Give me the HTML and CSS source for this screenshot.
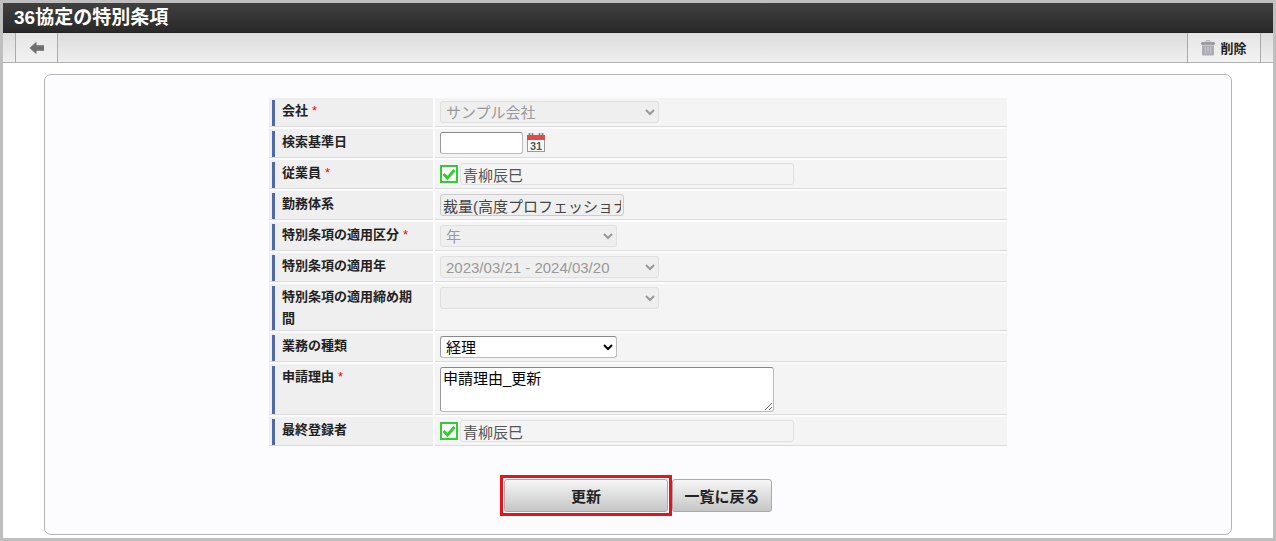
FILE: index.html
```html
<!DOCTYPE html>
<html lang="ja">
<head>
  <meta charset="UTF-8" />
  <meta name="viewport" content="width=device-width, initial-scale=1.0" />
  <title>36協定の特別条項</title>
  <link rel="stylesheet" href="styles.css">
</head>
<body>

  <header class="title-bar">
    <h1>36協定の特別条項</h1>
  </header>

  <nav class="toolbar">
    <button type="button" class="tool-button back" aria-label="戻る">
      <svg width="16" height="14" viewBox="0 0 16 14"><path d="M0.5 7L7.5 0.8V4.2H15V9.8H7.5V13.2Z" fill="#6e6e6e"/></svg>
    </button>
    <button type="button" class="tool-button delete">
      <svg width="14" height="16" viewBox="0 0 14 16">
        <path d="M5 2V0.8H9V2" fill="none" stroke="#aaa8ae"/>
        <rect x="0" y="2" width="14" height="3" rx="1" fill="#a09ea5"/>
        <path d="M1 5.5H13V14.5Q13 15.5 12 15.5H2Q1 15.5 1 14.5Z" fill="#aeacb3"/>
        <path d="M4.5 7V13.5M7 7V13.5M9.5 7V13.5" stroke="#c9c7cd"/>
      </svg>
      削除
    </button>
  </nav>

  <main class="content">
    <form class="card">
      <table class="form-table">
        <tr>
          <th><label for="company">会社<span class="required">*</span></label></th>
          <td><select id="company" class="field wide" disabled><option>サンプル会社</option></select></td>
        </tr>
        <tr>
          <th><label for="base-date">検索基準日</label></th>
          <td>
            <div class="field-row">
              <input type="text" id="base-date" class="field date">
              <button type="button" class="calendar" aria-label="カレンダー">
                <svg width="18" height="20" viewBox="0 0 18 20">
                  <rect x="0.5" y="5.5" width="17" height="13" fill="#fff" stroke="#999"/>
                  <rect x="0" y="2" width="18" height="5" fill="#f04438"/>
                  <path d="M2.5 0V3.5M5.5 0V3.5M12.5 0V3.5M15.5 0V3.5" stroke="#777" stroke-width="1.6"/>
                  <text x="9" y="16.5" text-anchor="middle" class="calendar-day">31</text>
                </svg>
              </button>
            </div>
          </td>
        </tr>
        <tr>
          <th><label for="employee">従業員<span class="required">*</span></label></th>
          <td>
            <div class="field-row person">
              <svg width="18" height="18" viewBox="0 0 18 18"><rect x="1" y="1" width="16" height="16" fill="#fff" stroke="#3c3" stroke-width="2"/><path d="M3.5 9L7.5 13L14.5 5" fill="none" stroke="#3c3" stroke-width="3"/></svg>
              <input type="text" id="employee" class="field long" value="青柳辰巳" disabled>
            </div>
          </td>
        </tr>
        <tr>
          <th><label for="work-system">勤務体系</label></th>
          <td><input type="text" id="work-system" class="field system" value="裁量(高度プロフェッショナル)" readonly></td>
        </tr>
        <tr>
          <th><label for="kind">特別条項の適用区分<span class="required">*</span></label></th>
          <td><select id="kind" class="field" disabled><option>年</option></select></td>
        </tr>
        <tr>
          <th><label for="year">特別条項の適用年</label></th>
          <td><select id="year" class="field wide" disabled><option>2023/03/21 - 2024/03/20</option></select></td>
        </tr>
        <tr>
          <th><label for="period">特別条項の適用締め期間</label></th>
          <td><select id="period" class="field wide" disabled><option></option></select></td>
        </tr>
        <tr>
          <th><label for="job">業務の種類</label></th>
          <td><select id="job" class="field"><option>経理</option></select></td>
        </tr>
        <tr>
          <th><label for="reason">申請理由<span class="required">*</span></label></th>
          <td><textarea id="reason" class="field reason">申請理由_更新</textarea></td>
        </tr>
        <tr>
          <th><label for="registrant">最終登録者</label></th>
          <td>
            <div class="field-row person">
              <svg width="18" height="18" viewBox="0 0 18 18"><rect x="1" y="1" width="16" height="16" fill="#fff" stroke="#3c3" stroke-width="2"/><path d="M3.5 9L7.5 13L14.5 5" fill="none" stroke="#3c3" stroke-width="3"/></svg>
              <input type="text" id="registrant" class="field long" value="青柳辰巳" disabled>
            </div>
          </td>
        </tr>
      </table>

      <div class="actions">
        <button type="button" class="button update">更新</button>
        <button type="button" class="button">一覧に戻る</button>
      </div>
    </form>
  </main>

</body>
</html>
```
FILE: styles.css
```css
* {
  box-sizing: border-box;
}

body {
  margin: 0;
  min-height: 100vh;
  display: flex;
  flex-direction: column;
  border: 3px solid #bfbfbf;
  background: #fff;
  color: #222;
  font-family: "Liberation Sans", "Noto Sans CJK JP", sans-serif;
}

button,
input,
select,
textarea {
  font-family: inherit;
}

.title-bar {
  height: 30px;
  padding: 0 11px;
  background: linear-gradient(#404040, #292929);
  border-bottom: 1px solid #222;
}

h1 {
  margin: 0;
  color: #fff;
  font-size: 19px;
  line-height: 29px;
}

.toolbar {
  display: flex;
  justify-content: space-between;
  height: 30px;
  padding: 0 12px;
  background: linear-gradient(#dcdcdc, #efefef);
  border-bottom: 1px solid #b0b0b0;
}

.tool-button {
  display: flex;
  align-items: center;
  justify-content: center;
  gap: 5px;
  padding: 0;
  border: 0;
  border-left: 1px solid #aaa;
  border-right: 1px solid #aaa;
  background: linear-gradient(#e6e6e6, #f2f2f2);
  color: #222;
  font-size: 13px;
  font-weight: bold;
}

.back {
  width: 43px;
}

.delete {
  width: 74px;
}

.content {
  flex: 1;
  padding: 11px 41px 3px;
}

.card {
  padding: 21px 20px 22px;
  border: 1px solid #b5b5b5;
  border-radius: 7px;
  background: #fcfcfe;
}

.form-table {
  width: 100%;
  max-width: 742px;
  margin: 0 auto;
  border-spacing: 2px;
  table-layout: fixed;
}

th,
td {
  height: 29px;
  border-bottom: 1px solid #dcdcdc;
  vertical-align: top;
}

th {
  width: 164px;
  padding: 2px 16px 0 3px;
  background: #efefef;
  text-align: left;
  font-size: 13px;
  line-height: 22px;
}

/* the blue bar runs the full height of the row */
th label {
  display: block;
  height: 100%;
  padding-left: 7px;
  border-left: 3px solid #4f69a5;
}

td {
  padding: 3px 5px 2px;
  background: #f4f4f4;
}

.required {
  margin-left: 4px;
  color: #f00;
  font-weight: normal;
}

.field-row {
  display: flex;
  align-items: center;
  gap: 4px;
}

.person {
  gap: 2px;
}

.field {
  display: block;
  width: 177px;
  height: 22px;
  margin: 0;
  padding: 0 2px;
  border: 1px solid #bbb;
  border-top-color: #888;
  border-left-color: #999;
  border-radius: 3px;
  background-color: #fff;
  color: #000;
  font-size: 15px;
}

select.field {
  padding: 0 1px;
}

.field:disabled {
  border-color: #e0e0e0;
  color: #555;
  background-color: #f4f4f4;
}

select.field:disabled {
  background-color: #efefef;
  color: #999;
  opacity: 1;
}

.wide {
  width: 219px;
}

.date {
  width: 83px;
}

.long {
  width: 334px;
}

.system {
  width: 184px;
  border-color: #ccc;
  background-color: #efefef;
  color: #444;
}

.reason {
  width: 334px;
  height: 45px;
  line-height: 22px;
}

.calendar {
  display: flex;
  padding: 0;
  border: 0;
  background: none;
}

.calendar-day {
  fill: #555;
  font-size: 11px;
  font-weight: bold;
}

.actions {
  display: flex;
  justify-content: center;
  gap: 4px;
  margin-top: 31px;
}

.button {
  width: 100px;
  height: 33px;
  padding: 0;
  border: 1px solid #aaa;
  border-radius: 3px;
  background: linear-gradient(#f6f6f6, #c6c6c6);
  color: #222;
  font-size: 15px;
  font-weight: bold;
}

.update {
  position: relative;
  width: 164px;
}

/* red frame around the main action */
.update::after {
  content: "";
  position: absolute;
  inset: -5px;
  border: 3px solid #e8111c;
}
```
